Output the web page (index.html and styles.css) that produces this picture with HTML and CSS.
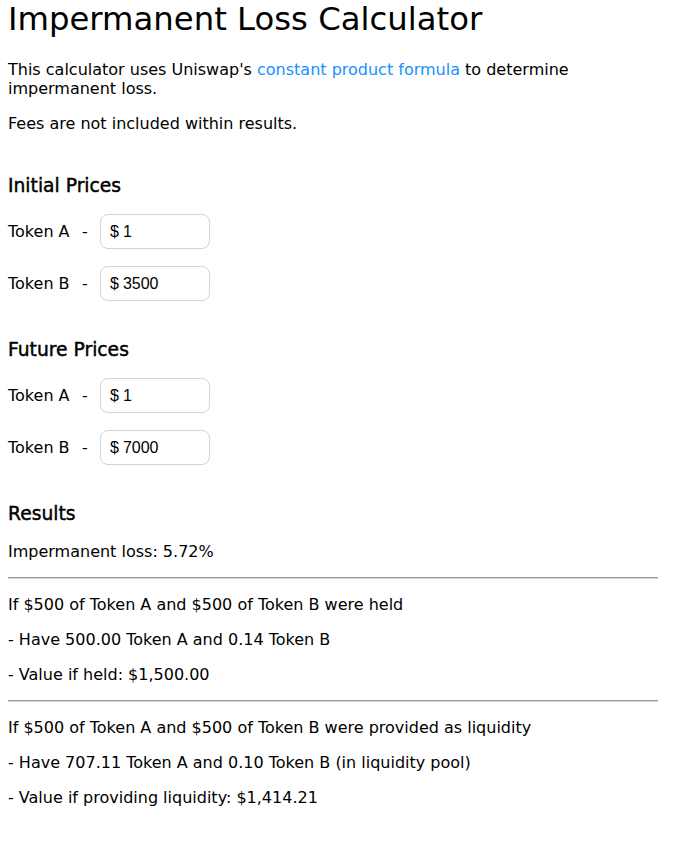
FILE: index.html
```html
<!DOCTYPE html>
<html lang="en">
<head>
<meta charset="utf-8">
<title>Impermanent Loss Calculator</title>
<link rel="stylesheet" href="styles.css">
</head>
<body>
<div class="page">
  <h1 class="title">Impermanent Loss Calculator</h1>
  <p class="text"><span>This calculator uses Uniswap's</span> <a class="link" href="#">constant product formula</a> <span>to determine</span> <span>impermanent loss.</span></p>
  <p class="text intro-last">Fees are not included within results.</p>

  <section class="section first">
    <h3 class="heading">Initial Prices</h3>
    <div class="rows">
      <div class="row"><span class="name">Token A</span><span class="dash">-</span><label class="field"><span class="cur">$</span><input class="amount" value="1"></label></div>
      <div class="row"><span class="name">Token B</span><span class="dash">-</span><label class="field"><span class="cur">$</span><input class="amount" value="3500"></label></div>
    </div>
  </section>

  <section class="section">
    <h3 class="heading">Future Prices</h3>
    <div class="rows">
      <div class="row"><span class="name">Token A</span><span class="dash">-</span><label class="field"><span class="cur">$</span><input class="amount" value="1"></label></div>
      <div class="row"><span class="name">Token B</span><span class="dash">-</span><label class="field"><span class="cur">$</span><input class="amount" value="7000"></label></div>
    </div>
  </section>

  <section class="section">
    <h3 class="heading">Results</h3>
    <p class="text">Impermanent loss: 5.72%</p>
    <hr class="divider">
    <p class="text">If $500 of Token A and $500 of Token B were held</p>
    <p class="text">- Have 500.00 Token A and 0.14 Token B</p>
    <p class="text">- Value if held: $1,500.00</p>
    <hr class="divider">
    <p class="text">If $500 of Token A and $500 of Token B were provided as liquidity</p>
    <p class="text">- Have 707.11 Token A and 0.10 Token B (in liquidity pool)</p>
    <p class="text">- Value if providing liquidity: $1,414.21</p>
  </section>
</div>
</body>
</html>
```
FILE: styles.css
```css
body {
  margin: 0;
  font-family: "DejaVu Sans", sans-serif;
  font-size: 16px;
  line-height: 19px;
  color: #000;
  background: #fff;
}

.page {
  max-width: 650px;
  padding: 0 8px;
}

.title {
  font-size: 32.3px;
  font-weight: 400;
  line-height: 38px;
  margin: 0 0 22px;
}

.text {
  margin: 0 0 16px;
}

.intro-last {
  margin-bottom: 0;
}

.link {
  color: #1890ff;
  text-decoration: none;
}

.section {
  margin-top: 37px;
}

.section.first {
  margin-top: 41px;
}

.heading {
  font-size: 18.72px;
  font-weight: 400;
  -webkit-text-stroke: 0.45px #000;
  line-height: 23px;
  margin: 0 0 17px;
}

.rows {
  display: flex;
  flex-direction: column;
  gap: 17px;
}

.row {
  display: flex;
  align-items: center;
  height: 35px;
}

.name {
  width: 74px;
}

.dash {
  width: 6px;
  margin-right: 12px;
}

.field {
  display: flex;
  align-items: center;
  box-sizing: border-box;
  width: 110px;
  height: 35px;
  padding: 0 8px 0 9px;
  border: 1px solid #d4d4d4;
  border-radius: 8px;
  font-family: "Liberation Sans", Arial, sans-serif;
  font-size: 16px;
}

.cur {
  margin-right: 4px;
}

.amount {
  width: 70px;
  border: 0;
  outline: 0;
  padding: 0;
  margin: 0;
  font: inherit;
  color: #000;
  background: transparent;
}

.divider {
  height: 0;
  margin: 0 0 16px;
  border: 0;
  border-top: 1px solid #9a9a9a;
  border-bottom: 1px solid #d6d6d6;
}
```
